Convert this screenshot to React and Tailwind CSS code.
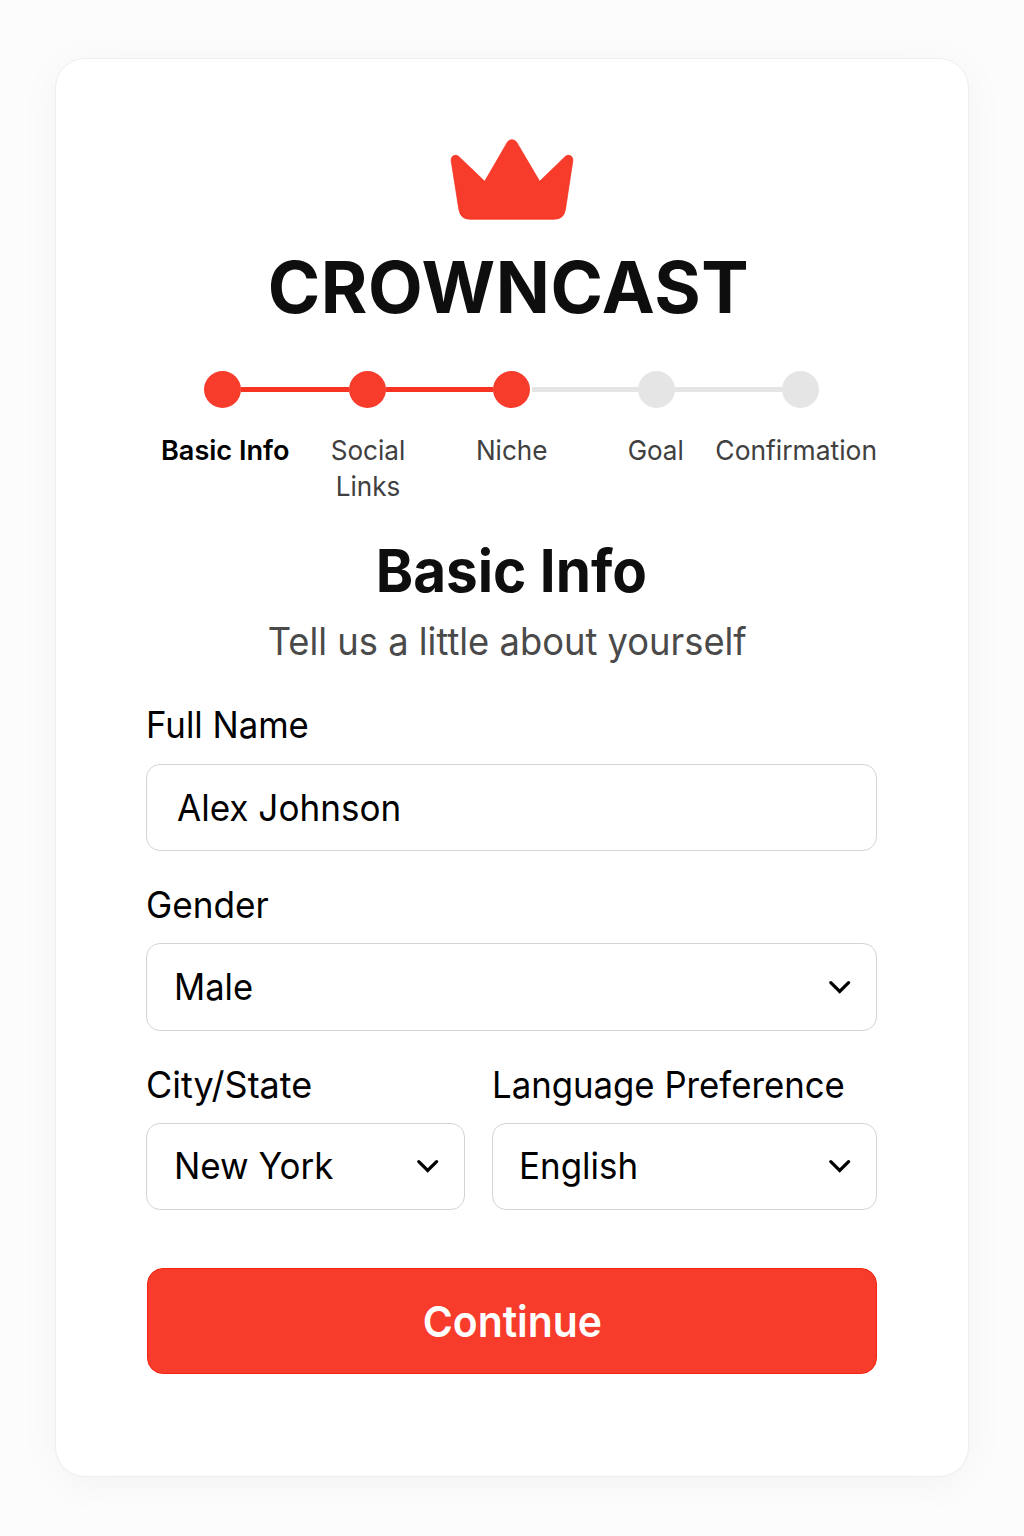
import clsx from "clsx";

const steps = [
  { label: "Basic Info", done: true, width: "w-[143px]", scale: "scale-x-[0.985]" },
  { label: "Social Links", done: true, width: "w-[141px]", scale: "scale-x-[0.95]" },
  { label: "Niche", done: true, width: "w-[147px]", scale: "scale-x-[0.95]" },
  { label: "Goal", done: false, width: "w-[141px]", scale: "scale-x-[0.945]" },
  { label: "Confirmation", done: false, width: "w-[141px]", scale: "scale-x-[0.96]" },
];

function Crown() {
  return (
    <svg className="mx-auto block h-[82px] w-[124px]" viewBox="0 0 124 82" fill="#f73c2b" stroke="#f5200f" strokeWidth="0.6">
      <path d="M1.2 22C.5 16.600 5.5 14.600 9 17.700L34.7 42.3L57.2 3.400C59.3 -.1 64.7 -.1 66.8 3.400L89.7 42.3L115 17.700C118.5 14.600 123.5 16.600 122.8 22L115.5 70.2Q114 80.3 104 80.3H20Q10.300 80.3 8.800 70.2Z" />
    </svg>
  );
}

function Chevron() {
  return (
    <svg className="h-[14px] w-[22px] shrink-0" viewBox="0 0 22 14" fill="none" stroke="#000" strokeWidth="3.200" strokeLinecap="round">
      <path d="M1.800 2.600L10.700 11.400L19.600 2.600" />
    </svg>
  );
}

function Stepper() {
  return (
    <div className="mt-[44px]">
      <div className="ml-[58px] flex w-[615px] items-center">
        {steps.map((step, i) => (
          <div key={step.label} className={clsx("flex items-center", i > 0 && "flex-1")}>
            {i > 0 && (
              <div
                className={clsx(
                  "h-[5px] flex-1",
                  step.done ? "bg-[#f73424]" : "bg-[#e5e5e5]",
                  i === 3 && "ml-[2px]"
                )}
              />
            )}
            <div className={clsx("size-[37px] rounded-full", step.done ? "bg-[#f73c2b]" : "bg-[#e5e5e5]")} />
          </div>
        ))}
      </div>
      <div className="mt-[24px] ml-[8px] flex h-[72px] w-[713px] text-[27.5px] leading-[36px]">
        {steps.map((step, i) => (
          <div key={step.label} className={clsx("flex shrink-0 justify-center", step.width)}>
            <span
              className={clsx(
                "shrink-0 text-center",
                step.scale,
                i === 0 ? "font-semibold text-black" : "font-normal text-[#404040]",
                i === 1 ? "w-[90px]" : "whitespace-nowrap"
              )}
            >
              {step.label}
            </span>
          </div>
        ))}
      </div>
    </div>
  );
}

function Label({ children, scale, className }) {
  return (
    <div className={clsx("h-[44px] whitespace-nowrap text-[36.5px] leading-[44px]", className)}>
      <span className={clsx("inline-block origin-left", scale)}>{children}</span>
    </div>
  );
}

function Field({ value, scale, className, chevron = true }) {
  return (
    <div
      className={clsx(
        "flex items-center justify-between rounded-[14px] border border-[#d4d4d4] bg-white pr-[25px] text-[36.5px] leading-[44px]",
        className
      )}
    >
      <span className={clsx("origin-left whitespace-nowrap", scale)}>{value}</span>
      {chevron && <Chevron />}
    </div>
  );
}

export default function App() {
  return (
    <div className="h-[1536px] w-[1024px] bg-[#fcfcfc] pt-[58px] pl-[55px] font-['Inter',sans-serif] text-black">
      <main className="h-[1419px] w-[914px] rounded-[30px] border border-[#eeeeee] bg-white pt-[80px] pl-[90px] shadow-[0_6px_44px_rgba(0,0,0,0.04)]">
        <div className="w-[731px]">
          <Crown />
          <h1 className="mt-[26px] pr-[6px] text-center text-[71px] leading-[80px] font-bold tracking-[0.6px] text-[#0e0e0e]">
            CROWNCAST
          </h1>
          <Stepper />
          <h2 className="mt-[35px] text-center text-[59px] leading-[64px] font-[650] text-[#0e0e0e]">
            <span className="inline-block scale-x-[0.96]">Basic Info</span>
          </h2>
          <p className="mt-[17px] pr-[8px] text-center text-[37.500px] leading-[44px] text-[#4a4a4a]">
            <span className="inline-block scale-x-[0.969]">Tell us a little about yourself</span>
          </p>

          <Label className="mt-[39px]" scale="scale-x-[0.952]">Full Name</Label>
          <Field className="mt-[17px] h-[87px] pl-[30px]" scale="scale-x-[0.961]" value="Alex Johnson" chevron={false} />

          <Label className="mt-[32px]" scale="scale-x-[0.964]">Gender</Label>
          <Field className="mt-[16px] h-[88px] pl-[27px]" scale="scale-x-[0.945]" value="Male" />

          <div className="mt-[32px] flex gap-[27px]">
            <div className="w-[319px]">
              <Label scale="scale-x-[0.985]">City/State</Label>
              <Field className="mt-[16px] h-[87px] pb-[1px] pl-[27px]" scale="scale-x-[0.957]" value="New York" />
            </div>
            <div className="w-[385px]">
              <Label scale="scale-x-[0.952]">Language Preference</Label>
              <Field className="mt-[16px] h-[87px] pb-[1px] pl-[26px]" scale="scale-x-[0.957]" value="English" />
            </div>
          </div>

          <button className="mt-[58px] ml-[1px] flex h-[106px] w-[730px] items-center justify-center rounded-[16px] border border-[#f52312] bg-[#f73c2b] text-[43px] font-semibold text-white">
            <span className="scale-x-[0.95]">Continue</span>
          </button>
        </div>
      </main>
    </div>
  );
}
